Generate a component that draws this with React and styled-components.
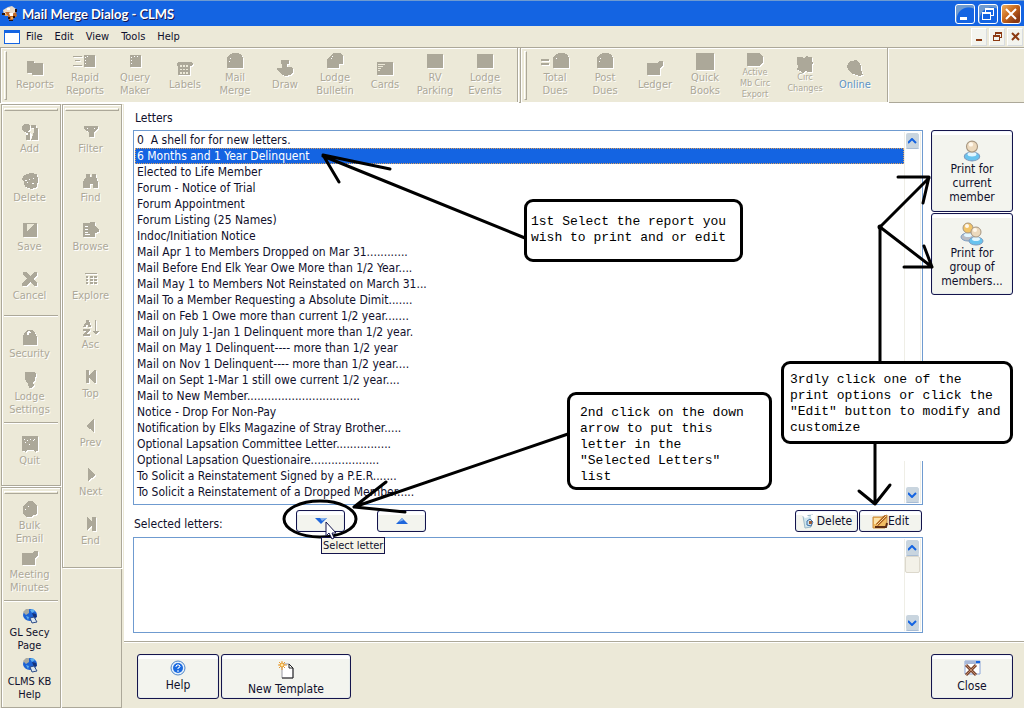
import styled, { createGlobalStyle, css } from 'styled-components';

const colors = {
	face: '#ece9d8',
	line: '#aca899',
	blue: '#1464e2',
	navy: '#14144c',
	text: '#10102c',
	field: '#6f9bd0',
	button: '#f3f4ee',
};

const toolIcons = {
	reports: <path d='M0 1h7v2h9v12H5v-2H0z' />,
	rapid: (
		<>
			<path d='M0 3h9v1H0zM2 7h5v1H2zM0 12h9v1H0z' />
			<path d='M11 2h11v12H11z' />
			<path fill='#fff' d='M12 4h1v1h-1zM12 7h1v1h-1zM12 10h1v1h-1zM14 3h1v1h-1z' />
		</>
	),
	query: (
		<>
			<path d='M3 2h11v12H3z' />
			<path fill='#fff' d='M4 4h1v1H4zM4 7h1v1H4zM4 10h1v1H4zM7 3h1v1H7zM10 3h1v1h-1z' />
		</>
	),
	labels: (
		<>
			<path d='M1 2h13l2 2-1 2h-2v9H1V6H0V3z' />
			<path fill='#ece9d8' d='M3 5h2v2H3zM6 5h2v2H6zM9 5h2v2H9zM3 9h2v1H3zM6 9h2v1H6zM9 9h2v1H9zM3 12h2v2H3zM6 12h2v2H6zM9 12h2v2H9z' />
		</>
	),
	mail: (
		<>
			<path d='M0 4l3-3 3-1h5l4 2 1 3v10H0z' />
			<path fill='#fff' d='M3 5h1v1H3zM2 8h1v1H2z' />
		</>
	),
	draw: <path d='M4 0h8v4h-2v3h3l3 1v5l-3 2-4 1-4-1-4-4-1-1V8h5V4H4z' />,
	bulletin: (
		<>
			<path d='M6 0h7l3 3v8h-4v4H0V6z' />
			<path fill='#fff' d='M5 3h1v1H5zM4 5h1v1H4z' />
		</>
	),
	cards: (
		<>
			<path d='M0 2h16v13H0z' />
			<path fill='#ece9d8' d='M1 4h7v1H1zM1 6h5v1H1zM1 8h3v1H1zM1 10h2v1H1z' />
		</>
	),
	square: <path d='M0 1h16v14H0z' />,
	dues: (
		<>
			<path d='M0 6h8v2H0zM0 10h8v2H0z' />
			<path d='M12 4l3-3 3-1h5l4 2 1 3v10H12z' />
			<path fill='#fff' d='M15 5h1v1h-1z' />
		</>
	),
	ledger: <path d='M0 3h10l3-2h3v4l-3 3v7H0z' />,
	books: <path d='M-1 0h18v17H-1z' />,
	exportIcon: <path d='M0 2h12l4 3v6l-3 4H0z' />,
	changes: <path d='M0 1h5l2 1 2-2 3 1h3v3l1 3-1 3v6h-4l-2-1-3 2-3-2-3-1 1-4-1-3z' />,
	online: <path d='M4 1l5-1 3 2 2 4v4l2 5-4 1-6-2-4-3-2-4 1-4z' />,
	add: (
		<>
			<path d='M2 0h4l2 2v3L6 8H2L0 6V2zM4 8h4v8H4zM9 1h5v3h2v12H9l3-8V4H9z' />
			<path fill='#fff' d='M4 9h2v2H4zM8 9l1 0v4h-1z' />
		</>
	),
	trash: (
		<>
			<path d='M2 2l6-2 7 1 1 6-1 7-6 2-6-2-1-5-2-3z' />
			<path fill='#fff' d='M3 7h2v1H3zM7 6h1v1H7zM11 5h1v1h-1zM5 9h1v1H5zM10 10h2v1h-2z' />
		</>
	),
	save: (
		<>
			<path d='M1 1h14v14H1z' />
			<path fill='#ece9d8' d='M5 2h8l-8 7z' />
		</>
	),
	cancel: <path d='M1 1h3l4 4 4-4h3v3l-4 4 4 4v3h-3l-4-4-4 4H0v-3l5-4-4-4z' />,
	security: (
		<>
			<path d='M1 7l2-4 2-2h5l3 3 2 4v8H1z' />
			<path fill='#fff' d='M5 3l2-1 2 1v1H7v2H5z' />
		</>
	),
	settings: <path d='M3 0h9l2 2-1 6-2 2 1 3-2 3H7l-1-4-2-3-1-3z' />,
	quit: (
		<>
			<path d='M0 0h16v15h-2l-1 1-2-2H5l-1 2-2-1H0z' />
			<path fill='#fff' d='M2 3h1v1H2zM5 4h1v1H5zM8 3h1v1H8zM11 4h1v1h-1zM3 6h1v1H3zM7 8h1v1H7zM12 3h1v1h-1z' />
		</>
	),
	bulk: (
		<>
			<path d='M1 5l3-3 3-2h3l2 2 3 3v8l-3 1-3 2H5l-4-3z' />
			<path fill='#fff' d='M6 5h1v1H6zM3 8h1v1H3z' />
		</>
	),
	filter: (
		<>
			<path d='M1 2h14v3l-4 3v5H6V8L1 5z' />
			<path fill='#fff' d='M4 4h1v1H4zM11 4h1v1h-1z' />
		</>
	),
	find: <path d='M3 1h4v3h2V1h4v3l2 5v6h-5v-4H7v4H0V9l3-5z' />,
	browse: (
		<>
			<path d='M0 1h5l3-1h4v4l4 3v3l-4 1v4H0z' />
			<path fill='#fff' d='M2 4h3v1H2zM2 7h3v1H2zM2 10h3v1H2zM2 12h5v1H2z' />
		</>
	),
	explore: <path d='M2 2h12v1H2zM3 5h2v2H3zM7 5h3v2H7zM11 5h3v2h-3zM3 8h2v2H3zM7 8h3v2H7zM11 8h3v2h-3zM3 11h2v2H3zM7 11h3v2H7zM11 11h3v2h-3z' />,
	asc: <path d='M3 0h3l2 7H5V5H3v2H0l3-5zM0 9h7v2l-4 3h4v2H0v-2l4-3H0zM12 0h1v11h3l-3 4-3-4h2z' />,
	top: <path d='M3 1h3v5l5-5h2v13h-2L6 9v5H3z' />,
	prev: <path d='M11 1v13L3 8z' />,
	next: <path d='M5 1v13l8-6z' />,
	end: <path d='M4 1l5 5V1h4v14H9v-5l-5 4z' />,
	globe: (
		<>
			<ellipse cx='8' cy='7' rx='7' ry='6' fill='#1c62d4' />
			<path fill='#a9aaa2' d='M1 4l3-3 3 0 0 4-3 2z' />
			<path fill='#5fb0ee' d='M8 2l3-1 2 2-3 2zM4 8l3 1-1 3z' />
			<path fill='#15337c' d='M10 5l4 1 1 3-3 1z' />
			<path fill='#dbe6ee' stroke='#2d4c88' strokeWidth='1' d='M8 10l4-1 3 5-5 1z' />
		</>
	),
};

const mainTools = [
	{ icon: 'reports', lines: ['Reports'] },
	{ icon: 'rapid', lines: ['Rapid', 'Reports'], wide: 24 },
	{ icon: 'query', lines: ['Query', 'Maker'] },
	{ icon: 'labels', lines: ['Labels'] },
	{ icon: 'mail', lines: ['Mail', 'Merge'] },
	{ icon: 'draw', lines: ['Draw'] },
	{ icon: 'bulletin', lines: ['Lodge', 'Bulletin'] },
	{ icon: 'cards', lines: ['Cards'] },
	{ icon: 'square', lines: ['RV', 'Parking'] },
	{ icon: 'square', lines: ['Lodge', 'Events'] },
];

const duesTools = [
	{ icon: 'dues', lines: ['Total', 'Dues'], wide: 28 },
	{ icon: 'mail', lines: ['Post', 'Dues'] },
	{ icon: 'ledger', lines: ['Ledger'] },
	{ icon: 'books', lines: ['Quick', 'Books'] },
	{ icon: 'exportIcon', lines: ['Active', 'Mb Circ', 'Export'], small: true },
	{ icon: 'changes', lines: ['Circ', 'Changes'], small: true },
	{ icon: 'online', lines: ['Online'], tone: 'link' },
];

const editTools = [
	{ icon: 'add', lines: ['Add'] },
	{ icon: 'trash', lines: ['Delete'] },
	{ icon: 'save', lines: ['Save'] },
	{ icon: 'cancel', lines: ['Cancel'] },
	null,
	{ icon: 'security', lines: ['Security'] },
	{ icon: 'settings', lines: ['Lodge', 'Settings'] },
	null,
	{ icon: 'quit', lines: ['Quit'] },
];

const mailTools = [
	{ icon: 'bulk', lines: ['Bulk', 'Email'] },
	{ icon: 'ledger', lines: ['Meeting', 'Minutes'] },
	null,
	{ icon: 'globe', lines: ['GL Secy', 'Page'], tone: 'active' },
	{ icon: 'globe', lines: ['CLMS KB', 'Help'], tone: 'active' },
];

const browseTools = [
	{ icon: 'filter', lines: ['Filter'] },
	{ icon: 'find', lines: ['Find'] },
	{ icon: 'browse', lines: ['Browse'] },
	{ icon: 'explore', lines: ['Explore'] },
	{ icon: 'asc', lines: ['Asc'] },
	{ icon: 'top', lines: ['Top'] },
	{ icon: 'prev', lines: ['Prev'] },
	{ icon: 'next', lines: ['Next'] },
	{ icon: 'end', lines: ['End'] },
];

const letters = [
	'0  A shell for for new letters.',
	'6 Months and 1 Year Delinquent',
	'Elected to Life Member',
	'Forum - Notice of Trial',
	'Forum Appointment',
	'Forum Listing (25 Names)',
	'Indoc/Initiation Notice',
	'Mail Apr 1 to Members Dropped on Mar 31............',
	'Mail Before End Elk Year Owe More than 1/2 Year....',
	'Mail May 1 to Members Not Reinstated on March 31...',
	'Mail To a Member Requesting a Absolute Dimit.......',
	'Mail on Feb 1 Owe more than current 1/2 year.......',
	'Mail on July 1-Jan 1 Delinquent more than 1/2 year.',
	'Mail on May 1 Delinquent---- more than 1/2 year',
	'Mail on Nov 1 Delinquent---- more than 1/2 year....',
	'Mail on Sept 1-Mar 1 still owe current 1/2 year....',
	'Mail to New Member.................................',
	'Notice - Drop For Non-Pay',
	'Notification by Elks Magazine of Stray Brother.....',
	'Optional Lapsation Committee Letter................',
	'Optional Lapsation Questionaire....................',
	'To Solicit a Reinstatement Signed by a P.E.R.......',
	'To Solicit a Reinstatement of a Dropped Member.....',
];

function Tool({ icon, lines, wide = 16, small, tone }) {
	return (
		<ToolButton type='button' disabled={!tone} $tone={tone} $small={small}>
			<ToolIcon width={wide} height='16' viewBox={`0 0 ${wide} 16`} $flat={tone === 'active'}>
				{toolIcons[icon]}
			</ToolIcon>
			<span>
				{lines.map(line => (
					<ToolLine key={line}>{line}</ToolLine>
				))}
			</span>
		</ToolButton>
	);
}

function ToolSet({ tools }) {
	return tools.map((tool, i) => (tool ? <Tool key={i} {...tool} /> : <Divider key={i} />));
}

function ScrollBar({ thumb }) {
	return (
		<Track>
			<ScrollButton type='button' aria-label='Scroll up'>
				<svg width='9' height='6' viewBox='0 0 9 6'>
					<path d='M0 5l4-4 4 4' fill='none' stroke={colors.blue} strokeWidth='2' />
				</svg>
			</ScrollButton>
			{thumb && <Thumb />}
			<ScrollButton type='button' aria-label='Scroll down' $last>
				<svg width='9' height='6' viewBox='0 0 9 6'>
					<path d='M0 1l4 4 4-4' fill='none' stroke={colors.blue} strokeWidth='2' />
				</svg>
			</ScrollButton>
		</Track>
	);
}

function Person({ x = 0, y = 0, head = '#ecd9bd', body = '#69c3ee' }) {
	return (
		<g transform={`translate(${x} ${y})`}>
			<ellipse cx='8' cy='15' rx='7' ry='4' fill={body} stroke='#7d9cc0' />
			<ellipse cx='8' cy='13' rx='4' ry='2' fill='#e2f6ff' />
			<circle cx='8' cy='6' r='5' fill={head} stroke='#a79680' />
			<circle cx='7' cy='4' r='2' fill='#fff8ec' />
		</g>
	);
}

function Annotations() {
	return (
		<>
			<Cover />
			<Ink width='900' height='604' viewBox='124 104 900 604' aria-hidden='true'>
				<path d='M525 238L323 156M390 169L323 155L339 182' />
				<path d='M568 434L354 507M386 482L354 507L405 512' />
				<ellipse cx='320' cy='519' rx='36' ry='18' />
				<path d='M880 362V227L929 178M898 177H929L923 203M880 227L932 267M924 246L932 267H904' />
				<circle cx='880' cy='227' r='1' />
				<path d='M875 444V504M859 491L875 504L890 485' />
			</Ink>
			<Callout $left={400} $top={95} $width={219} $height={63} $pad='12px 4px'>
				{'1st Select the report you\nwish to print and or edit'}
			</Callout>
			<Callout $left={443} $top={288} $width={205} $height={98} $pad='10px 10px'>
				{'2nd click on the down\narrow to put this\nletter in the\n"Selected Letters"\nlist'}
			</Callout>
			<Callout $left={657} $top={257} $width={232} $height={83} $pad='8px 6px'>
				{'3rdly click one of the\nprint options or click the\n"Edit" button to modify and\ncustomize'}
			</Callout>
		</>
	);
}

export default function App() {
	return (
		<Window>
			<GlobalStyle />
			<TitleBar>
				<svg width='18' height='18' viewBox='0 0 18 18'>
					<path fill='#e9dccb' d='M2 5l5-3 4-1 4 3v4l-8 3-4-1z' />
					<path fill='#c06a2a' d='M4 7h4l3 2 4-2 1 4-3 2-2 3-3-1-1-4z' />
					<path fill='#fff' d='M8 8h4v3H9zM6 3h3v2H6z' />
					<path fill='#28120c' d='M1 8h3v2H1zM7 12h2v2H7zM12 11h2v2h-2zM8 15h4v1H8zM14 4h2v3h-2z' />
					<path fill='#f0a64c' d='M10 12h2v2h-2zM4 9h2v2H4z' />
				</svg>
				<Title>Mail Merge Dialog - CLMS</Title>
				<WindowButton type='button' aria-label='Minimize'>
					<svg width='18' height='18' viewBox='0 0 18 18'>
						<path fill='#fff' d='M4 12h7v3H4z' />
					</svg>
				</WindowButton>
				<WindowButton type='button' aria-label='Restore'>
					<svg width='18' height='18' viewBox='0 0 18 18' shapeRendering='crispEdges'>
						<path fill='#fff' fillRule='evenodd' d='M6 3h9v8h-3v-1h2V5H7v2H6zM3 7h9v8H3zM4 9v5h7V9z' />
					</svg>
				</WindowButton>
				<WindowButton type='button' aria-label='Close window' $close>
					<svg width='18' height='18' viewBox='0 0 18 18'>
						<path d='M4 4l10 10M14 4L4 14' stroke='#fff' strokeWidth='2' />
					</svg>
				</WindowButton>
			</TitleBar>
			<MenuBar>
				<svg width='16' height='15' viewBox='0 0 16 15' shapeRendering='crispEdges'>
					<path fill={colors.blue} d='M0 1h16v14H0z' />
					<path fill='#fff' d='M1 4h14v10H1z' />
				</svg>
				{['File', 'Edit', 'View', 'Tools', 'Help'].map(item => (
					<MenuItem key={item} type='button'>
						{item}
					</MenuItem>
				))}
				<ChildButtons>
					<ChildButton type='button' aria-label='Minimize child'>
						<svg width='11' height='11' viewBox='0 0 11 11'>
							<path fill='#8c3a12' d='M2 8h6v2H2z' />
						</svg>
					</ChildButton>
					<ChildButton type='button' aria-label='Restore child'>
						<svg width='11' height='11' viewBox='0 0 11 11' shapeRendering='crispEdges'>
							<path fill='#8c3a12' d='M3 1h7v6H8V6h1V3H4v1H3zM1 4h7v6H1zM2 6v3h5V6z' fillRule='evenodd' />
						</svg>
					</ChildButton>
					<ChildButton type='button' aria-label='Close child'>
						<svg width='11' height='11' viewBox='0 0 11 11'>
							<path d='M2 2l7 7M9 2L2 9' stroke='#8c3a12' strokeWidth='2' />
						</svg>
					</ChildButton>
				</ChildButtons>
			</MenuBar>
			<ToolBar>
				<Band>
					<Grip />
					<ToolSet tools={mainTools} />
				</Band>
				<Band>
					<Grip />
					<ToolSet tools={duesTools} />
				</Band>
			</ToolBar>
			<Body>
				<Column>
					<Band $vertical $tail={9}>
						<Grip $flat />
						<ToolSet tools={editTools} />
					</Band>
					<Band $vertical $fill>
						<Grip $flat />
						<ToolSet tools={mailTools} />
					</Band>
				</Column>
				<Column>
					<Band $vertical $tail={11}>
						<Grip $flat />
						<ToolSet tools={browseTools} />
					</Band>
					<EmptyBand />
				</Column>
				<Dialog>
					<Content>
						<div>
							<ListLabel id='letters-label'>Letters</ListLabel>
							<ListBox>
								<List role='listbox' aria-labelledby='letters-label'>
									{letters.map((letter, i) => (
										<Letter key={letter} role='option' aria-selected={i === 1} $selected={i === 1}>
											{letter}
										</Letter>
									))}
								</List>
								<ScrollBar />
							</ListBox>
							<Actions>
								<ActionsLabel id='selected-label'>Selected letters:</ActionsLabel>
								<MoveButton type='button' aria-label='Select letter'>
									<svg width='12' height='6' viewBox='0 0 12 6'>
										<path fill='#1f67dc' d='M0 0h12L6 6z' />
										<path fill='#8ab4ee' d='M5 0h7L7 3z' />
									</svg>
								</MoveButton>
								<MoveButton type='button' aria-label='Remove letter'>
									<svg width='12' height='6' viewBox='0 0 12 6'>
										<path fill='#1f67dc' d='M0 6h12L6 0z' />
										<path fill='#8ab4ee' d='M6 0l2 2-5 2z' />
									</svg>
								</MoveButton>
								<EditButtons>
									<SmallButton type='button'>
										<svg width='16' height='16' viewBox='0 0 16 16'>
											<path fill='#cfe6ee' stroke='#9cb8c8' d='M2 3l10-1-2 12-6 1z' />
											<path fill='#fff' d='M1 2l4-1 3 3-4 1zM10 2l5 0-2 9-2 1z' />
											<path fill='#9a5a34' d='M8 8h3v3H8z' />
											<path fill='none' stroke='#3a6ca8' d='M6 8l3-2 3 3-2 4-4-1z' />
										</svg>
										Delete
									</SmallButton>
									<SmallButton type='button'>
										<svg width='16' height='16' viewBox='0 0 16 16'>
											<path fill='#f2bd63' stroke='#c88a3c' d='M1 4h9l5-2v10l-2 3H1z' />
											<path fill='#fde3a8' d='M2 5h7l-5 6H2z' />
											<path d='M5 12L14 3' stroke='#a85a1c' strokeWidth='3' />
											<path d='M5 12L14 3' stroke='#f6dc9c' />
											<path d='M3 14h11l1-4' fill='none' stroke='#5d2c12' strokeWidth='2' />
										</svg>
										Edit
									</SmallButton>
								</EditButtons>
							</Actions>
							<ListBox>
								<SelectedList role='listbox' aria-labelledby='selected-label' />
								<ScrollBar thumb />
							</ListBox>
						</div>
						<PrintButtons>
							<PrintButton type='button'>
								<svg width='18' height='22' viewBox='0 0 16 20'>
									<Person />
								</svg>
								<span>Print for current member</span>
							</PrintButton>
							<PrintButton type='button'>
								<svg width='24' height='24' viewBox='0 0 24 24'>
									<Person head='#f2c468' body='#b9bcc4' />
									<Person x={8} y={4} />
								</svg>
								<span>Print for group of members...</span>
							</PrintButton>
						</PrintButtons>
					</Content>
					<Footer>
						<FooterButton type='button' $width={82}>
							<svg width='16' height='16' viewBox='0 0 16 16'>
								<circle cx='8' cy='8' r='7' fill='#e6f1fb' stroke='#4f86c8' />
								<circle cx='8' cy='8' r='5' fill='#1a6ae0' />
								<path d='M6 7V6l1-1h2l1 1v1L8 8v1M8 10v2' fill='none' stroke='#fff' strokeWidth='1' />
							</svg>
							Help
						</FooterButton>
						<FooterButton type='button' $width={130} $low>
							<svg width='16' height='18' viewBox='0 0 16 18'>
								<path fill='#fff' stroke='#9a9aa4' d='M4 3h7l4 4v10H4z' />
								<path fill='none' stroke='#222' d='M11 3l4 4v10H4M11 3v4h4' />
								<path d='M4 0v9M0 4h9M1 1l6 6M7 1L1 7' stroke='#e79a2e' />
								<circle cx='4' cy='4' r='2' fill='#ffe9a6' stroke='#e79a2e' />
							</svg>
							New Template
						</FooterButton>
						<FooterButton type='button' $width={82} $end>
							<svg width='17' height='17' viewBox='0 0 17 17'>
								<path fill='#fff' stroke='#8aa4d8' d='M1 1h15v13H1z' />
								<path fill='#a8b8d8' d='M1 1h15v3H1z' />
								<path fill={colors.blue} d='M12 1h4v2h-4z' />
								<path d='M2 5l10 10M12 5L2 15' stroke='#7a4630' strokeWidth='3' />
								<path d='M2 5l10 10M12 5L2 15' stroke='#c08a6c' />
							</svg>
							Close
						</FooterButton>
					</Footer>
					<Annotations />
					<Tooltip role='tooltip'>Select letter</Tooltip>
					<Pointer width='13' height='20' viewBox='0 0 13 20'>
						<path fill='#fff' stroke={colors.navy} d='M1 1v14l3-3 3 6 2-1-2-5h4z' />
					</Pointer>
				</Dialog>
			</Body>
		</Window>
	);
}

const GlobalStyle = createGlobalStyle`
	* {
		box-sizing: border-box;
	}

	body {
		margin: 0;
		background: ${colors.face};
		color: ${colors.text};
		font: 12px/16px 'DejaVu Sans Condensed', 'DejaVu Sans', sans-serif;
	}

	button {
		font: inherit;
		color: inherit;
		padding: 0;
		border: 0;
		background: none;
	}

	svg {
		flex: none;
	}
`;

const Window = styled.div`
	display: flex;
	flex-direction: column;
	min-height: 100vh;
`;

const TitleBar = styled.header`
	display: flex;
	align-items: center;
	gap: 3px;
	height: 26px;
	padding: 0 3px 0 1px;
	background: ${colors.blue};
	border-top: 1px solid #6f9bd0;
`;

const Title = styled.h1`
	flex: 1;
	margin: 0;
	font: bold 13px/18px Lato, sans-serif;
	color: #fff;
	text-shadow: 1px 1px 0 ${colors.navy};
`;

const WindowButton = styled.button`
	display: flex;
	width: 20px;
	height: 20px;
	border: 1px solid #fff;
	border-radius: 3px;
	background: radial-gradient(circle at 70% 80%, ${colors.blue} 60%, #6f9bd0 65%);

	${props =>
		props.$close &&
		css`
			background: linear-gradient(135deg, #e8a050 10%, #c8681c 45%, #8c3a12 80%);
		`}
`;

const MenuBar = styled.nav`
	display: flex;
	align-items: center;
	height: 21px;
	padding: 0 1px 0 4px;
	font-size: 11px;
`;

const MenuItem = styled.button`
	padding: 0 6px;
`;

const ChildButtons = styled.div`
	display: flex;
	gap: 2px;
	margin-left: auto;
`;

const ChildButton = styled.button`
	display: grid;
	place-items: center;
	width: 16px;
	height: 18px;
	background: ${colors.button};
	border: 1px solid #fff;
	border-right-color: #d8dce0;
	border-bottom-color: #d8dce0;
`;

const ToolBar = styled.div`
	display: flex;
	gap: 2px;
	min-height: 56px;
	background: linear-gradient(${colors.line} 1px, #fff 1px 2px, transparent 2px);
	border-bottom: 1px solid ${colors.line};
	box-shadow: 0 1px 0 #fff;
`;

const Band = styled.div`
	display: flex;
	flex-direction: ${props => (props.$vertical ? 'column' : 'row')};
	flex: ${props => (props.$fill ? '1' : 'none')};
	align-items: center;
	padding: ${props => (props.$vertical ? `3px 0 ${props.$tail || 3}px` : '0 7px 0 3px')};
	border: 1px solid ${colors.line};
	border-bottom-width: ${props => (props.$vertical ? '1px' : '0')};
	box-shadow: 1px 1px 0 #fff, inset 1px 1px 0 #fff;
`;

const EmptyBand = styled.div`
	flex: 1;
	border: 1px solid ${colors.line};
	border-width: 0 1px 1px 0;
`;

const Grip = styled.i`
	width: ${props => (props.$flat ? '54px' : '3px')};
	height: ${props => (props.$flat ? '3px' : '49px')};
	margin: ${props => (props.$flat ? '0 0 4px' : '0 3px 0 0')};
	border: 1px solid #fff;
	border-right-color: ${colors.line};
	border-bottom-color: ${colors.line};
`;

const ToolButton = styled.button`
	display: flex;
	flex: none;
	flex-direction: column;
	align-items: center;
	justify-content: center;
	gap: 2px;
	width: 50px;
	height: 49px;
	font-size: 11px;
	line-height: 13px;
	color: ${colors.line};
	text-shadow: 1px 1px 0 #fff;

	aside & {
		padding-right: 3px;
	}

	${props =>
		props.$small &&
		css`
			gap: 0;
			font-size: 9px;
			line-height: 11px;
		`}

	${props =>
		props.$tone === 'link' &&
		css`
			color: #5c94c4;
		`}

	${props =>
		props.$tone === 'active' &&
		css`
			color: ${colors.text};
			text-shadow: none;
		`}
`;

const ToolLine = styled.span`
	display: block;
	white-space: nowrap;
`;

const ToolIcon = styled.svg`
	fill: ${colors.line};
	overflow: visible;
	filter: ${props => (props.$flat ? 'none' : 'drop-shadow(1px 1px 0 #fff)')};
	shape-rendering: ${props => (props.$flat ? 'auto' : 'crispEdges')};
`;

const Divider = styled.hr`
	width: 54px;
	height: 2px;
	margin: 4px 0 3px;
	border: 0;
	background: linear-gradient(${colors.line} 1px, #fff 1px);
`;

const Body = styled.div`
	flex: 1;
	display: flex;
	gap: 1px;
	padding: 1px 0 0 1px;
`;

const Column = styled.aside`
	display: flex;
	flex-direction: column;
	gap: 1px;
	width: 60px;
	flex: none;
`;

const Dialog = styled.main`
	position: relative;
	flex: 1;
	display: flex;
	flex-direction: column;
	margin-left: 1px;
	background: #fff;
`;

const Content = styled.section`
	flex: 1;
	display: grid;
	grid-template-columns: 1fr 82px;
	gap: 8px;
	padding: 0 11px 8px 9px;
`;

const ListLabel = styled.h2`
	margin: 0;
	padding: 6px 2px 4px;
	font: inherit;
`;

const ListBox = styled.div`
	display: flex;
	padding: 1px;
	border: 1px solid ${colors.field};
	background: #fff;
`;

const List = styled.ul`
	flex: 1;
	margin: 0;
	padding: 0 0 3px;
	list-style: none;
`;

const SelectedList = styled(List)`
	min-height: 92px;
`;

const Letter = styled.li`
	height: 16px;
	padding: 0 2px;
	white-space: pre;

	${props =>
		props.$selected &&
		css`
			color: #fff;
			background: ${colors.blue};
			outline: 1px dotted #d8a060;
			outline-offset: -1px;
		`}
`;

const Track = styled.div`
	display: flex;
	flex-direction: column;
	align-items: center;
	width: 17px;
	border: 1px solid #efeee6;
	border-width: 0 1px;
`;

const ScrollButton = styled.button`
	display: grid;
	place-items: center;
	width: 15px;
	height: 17px;
	margin-top: ${props => (props.$last ? 'auto' : '0')};
	border: 1px solid #fff;
	border-bottom-color: #a8bcd4;
	border-radius: 3px;
	background: #c9d5df;
`;

const Thumb = styled.div`
	width: 15px;
	height: 17px;
	border: 1px solid #dcd8cc;
	border-radius: 2px;
	background: #f3f1e8;
`;

const Actions = styled.div`
	display: flex;
	gap: 32px;
	padding: 5px 1px;
`;

const ActionsLabel = styled.span`
	width: 130px;
	padding-top: 6px;
	white-space: nowrap;
`;

const XpButton = styled.button`
	display: flex;
	align-items: center;
	justify-content: center;
	border: 1px solid ${colors.navy};
	border-radius: 3px;
	background: linear-gradient(#fff 4px, ${colors.button} 4px);
	box-shadow: inset 0 0 1px #7ea6dc;
`;

const MoveButton = styled(XpButton)`
	width: 49px;
	height: 22px;
`;

const EditButtons = styled.div`
	display: flex;
	gap: 1px;
	margin-left: auto;
`;

const SmallButton = styled(XpButton)`
	width: 63px;
	height: 22px;
`;

const PrintButtons = styled.div`
	display: flex;
	flex-direction: column;
	gap: 1px;
	padding-top: 26px;
`;

const PrintButton = styled(XpButton)`
	flex-direction: column;
	height: 82px;
	padding: 1px 4px 0;
	line-height: 14px;
`;

const Footer = styled.footer`
	display: flex;
	gap: 2px;
	padding: 12px 11px 9px 13px;
	background: ${colors.face};
	border-top: 1px solid ${colors.line};
	box-shadow: inset 0 1px 0 #fff;
`;

const FooterButton = styled(XpButton)`
	flex-direction: column;
	gap: ${props => (props.$low ? '2px' : '1px')};
	width: ${props => props.$width}px;
	height: 45px;
	padding-top: ${props => (props.$low ? '5px' : '0')};
	margin-left: ${props => (props.$end ? 'auto' : '0')};
`;

const Ink = styled.svg`
	position: absolute;
	left: 0;
	top: 0;
	fill: none;
	stroke: #000;
	stroke-width: 3;
	stroke-linecap: round;
	stroke-linejoin: round;
	pointer-events: none;
`;

const Cover = styled.div`
	position: absolute;
	left: 660px;
	top: 267px;
	width: 230px;
	height: 90px;
	background: #fff;
`;

const Callout = styled.p`
	position: absolute;
	left: ${props => props.$left}px;
	top: ${props => props.$top}px;
	width: ${props => props.$width}px;
	height: ${props => props.$height}px;
	margin: 0;
	padding: ${props => props.$pad};
	border: 3px solid #000;
	border-radius: 9px;
	background: #fff;
	color: #000;
	font: 13px/16px 'Liberation Mono', monospace;
	white-space: pre;
`;

const Tooltip = styled.div`
	position: absolute;
	left: 197px;
	top: 433px;
	padding: 0 1px;
	border: 1px solid ${colors.navy};
	background: #f6f5e8;
	font-size: 11px;
	line-height: 15px;
	white-space: nowrap;
`;

const Pointer = styled.svg`
	position: absolute;
	left: 201px;
	top: 417px;
`;
